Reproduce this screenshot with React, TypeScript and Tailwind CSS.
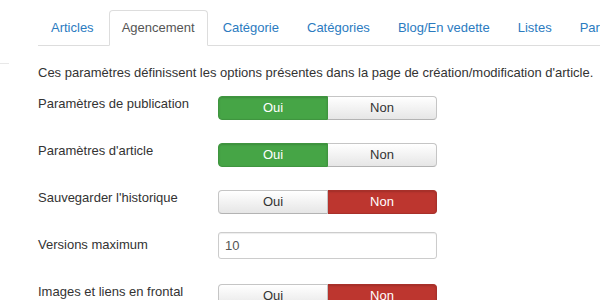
import React from "react";

const tabs = ["Articles", "Agencement", "Catégorie", "Catégories", "Blog/En vedette", "Listes", "Partage"];

function Toggle({ value }: { value: "oui" | "non" }) {
  const base =
    "h-[24px] flex-1 flex items-center justify-center text-[13px] leading-[18px] border";
  const off =
    "bg-gradient-to-b from-white to-[#e6e6e6] border-[#c5c5c5] border-b-[#b3b3b3] text-[#333]";
  return (
    <div className="flex w-[219px] mt-px">
      <div
        className={
          base +
          " rounded-l-[4px] " +
          (value === "oui"
            ? "bg-[#46a546] border-[#3f953f] text-white shadow-[inset_0_1px_2px_rgba(0,0,0,0.15)]"
            : off)
        }
      >
        Oui
      </div>
      <div
        className={
          base +
          " rounded-r-[4px] border-l-0 " +
          (value === "non"
            ? "bg-[#bd362f] border-[#a8302a] text-white shadow-[inset_0_1px_2px_rgba(0,0,0,0.15)]"
            : off)
        }
      >
        Non
      </div>
    </div>
  );
}

function Row({ label, children }: { label: string; children: React.ReactNode }) {
  return (
    <div className="flex items-start h-[47px]">
      <div className="w-[180px] text-[13px] leading-[18px] text-[#333]">{label}</div>
      {children}
    </div>
  );
}

export default function App() {
  return (
    <div
      className="w-[600px] h-[300px] overflow-hidden bg-white relative"
      style={{ fontFamily: '"Liberation Sans", Arial, sans-serif' }}
    >
      <div className="absolute left-0 top-[63px] w-[9px] h-px bg-[#e8e8e8]" />
      <div className="pl-[38px]">
        <ul className="flex pt-[10px] border-b border-[#ddd] whitespace-nowrap">
          {tabs.map((t) => (
            <li key={t} className="-mb-px mr-[2px] shrink-0">
              <div
                className={
                  "block px-3 py-2 text-[13px] leading-[18px] border rounded-t-[4px] " +
                  (t === "Agencement"
                    ? "border-[#ddd] border-b-white bg-white text-[#555]"
                    : "border-transparent text-[#2b7bbf]")
                }
              >
                {t}
              </div>
            </li>
          ))}
        </ul>
        <p className="mt-[18px] text-[13px] leading-[18px] text-[#333] whitespace-nowrap">
          Ces paramètres définissent les options présentes dans la page de création/modification d'article.
        </p>
        <div className="mt-[13px]">
          <Row label="Paramètres de publication">
            <Toggle value="oui" />
          </Row>
          <Row label="Paramètres d'article">
            <Toggle value="oui" />
          </Row>
          <Row label="Sauvegarder l'historique">
            <Toggle value="non" />
          </Row>
          <Row label="Versions maximum">
            <div className="w-[219px] h-[27px] -mt-[4px] border border-[#ccc] rounded-[3px] px-[6px] flex items-center text-[13px] text-[#555] shadow-[inset_0_1px_1px_rgba(0,0,0,0.075)]">
              10
            </div>
          </Row>
          <Row label="Images et liens en frontal">
            <Toggle value="non" />
          </Row>
        </div>
      </div>
    </div>
  );
}
